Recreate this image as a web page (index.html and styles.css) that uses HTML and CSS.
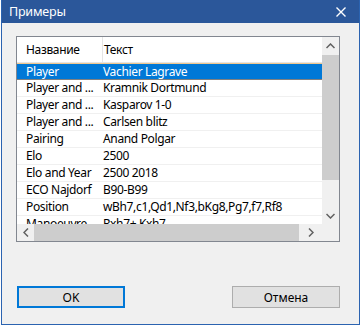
FILE: index.html
```html
<!DOCTYPE html>
<html lang="ru">
<head>
  <meta charset="UTF-8" />
  <title>Примеры</title>
  <link rel="stylesheet" href="styles.css">
</head>
<body>
  <div class="window">
    <div class="titlebar">
      <span class="title">Примеры</span>
      <svg class="close" width="10" height="10" viewBox="0 0 10 10">
        <path d="M0.5 0.5 L9.5 9.5 M9.5 0.5 L0.5 9.5" stroke="#fff" stroke-width="1.4" />
      </svg>
    </div>

    <div class="content">
      <div class="listview">
        <div class="viewport">
          <div class="row header">
            <div class="cell name">Название</div>
            <div class="cell text">Текст</div>
          </div>
          <div class="row selected">
            <div class="cell name">Player</div>
            <div class="cell text">Vachier Lagrave</div>
          </div>
          <div class="row">
            <div class="cell name">Player and ...</div>
            <div class="cell text">Kramnik Dortmund</div>
          </div>
          <div class="row">
            <div class="cell name">Player and ...</div>
            <div class="cell text">Kasparov 1-0</div>
          </div>
          <div class="row">
            <div class="cell name">Player and ...</div>
            <div class="cell text">Carlsen blitz</div>
          </div>
          <div class="row">
            <div class="cell name">Pairing</div>
            <div class="cell text">Anand Polgar</div>
          </div>
          <div class="row">
            <div class="cell name">Elo</div>
            <div class="cell text">2500</div>
          </div>
          <div class="row">
            <div class="cell name">Elo and Year</div>
            <div class="cell text">2500 2018</div>
          </div>
          <div class="row">
            <div class="cell name">ECO Najdorf</div>
            <div class="cell text">B90-B99</div>
          </div>
          <div class="row">
            <div class="cell name">Position</div>
            <div class="cell text">wBh7,c1,Qd1,Nf3,bKg8,Pg7,f7,Rf8</div>
          </div>
          <div class="row">
            <div class="cell name">Manoeuvre</div>
            <div class="cell text">Rxh7+ Kxh7</div>
          </div>
        </div>

        <div class="vscroll">
          <div class="arrow">
            <svg width="9" height="6" viewBox="0 0 9 6"><path d="M0.5 5 L4.5 1 L8.5 5" fill="none" stroke="#606060" stroke-width="1.5"/></svg>
          </div>
          <div class="vthumb"></div>
          <div class="vtrack"></div>
          <div class="arrow">
            <svg width="9" height="6" viewBox="0 0 9 6"><path d="M0.5 1 L4.5 5 L8.5 1" fill="none" stroke="#606060" stroke-width="1.5"/></svg>
          </div>
        </div>

        <div class="hscroll">
          <div class="arrow">
            <svg width="6" height="9" viewBox="0 0 6 9"><path d="M5 0.5 L1 4.5 L5 8.5" fill="none" stroke="#606060" stroke-width="1.5"/></svg>
          </div>
          <div class="hthumb"></div>
          <div class="arrow wide">
            <svg width="6" height="9" viewBox="0 0 6 9"><path d="M1 0.5 L5 4.5 L1 8.5" fill="none" stroke="#606060" stroke-width="1.5"/></svg>
          </div>
        </div>
        <div class="corner"></div>
      </div>

      <div class="buttons">
        <button class="btn default">OK</button>
        <button class="btn">Отмена</button>
      </div>
    </div>
  </div>
</body>
</html>
```

FILE: styles.css
```css
body {
  margin: 0;
  background: #ffffff;
  font-family: "Noto Sans", "Open Sans", sans-serif;
  font-size: 12px;
  color: #000;
}

.window {
  margin-left: 1px;
  width: 357px;
  height: 324px;
  border: 1px solid #2b63b0;
  border-top: none;
  background: #f0f0f0;
  display: flex;
  flex-direction: column;
}

.titlebar {
  height: 23px;
  background: #2b579a;
  color: #fff;
  display: flex;
  align-items: center;
  justify-content: space-between;
  padding: 0 13px 0 7px;
}

.title {
  font-size: 12.5px;
  letter-spacing: -0.2px;
}

.content {
  flex: 1;
  padding: 13px 19px 0 14px;
}

.listview {
  height: 204px;
  border: 1px solid #828790;
  background: #fff;
  display: grid;
  grid-template-columns: 1fr 17px;
  grid-template-rows: 1fr 17px;
}

.viewport {
  overflow: hidden;
}

.row {
  display: flex;
  height: 16px;
  line-height: 16px;
  border-bottom: 1px solid #f0f0f0;
  white-space: nowrap;
  letter-spacing: -0.35px;
}

.row.header {
  height: 25px;
  line-height: 25px;
  border-bottom: 1px solid #e5e5e5;
}

.header .name {
  border-right: 1px solid #e5e5e5;
  padding-left: 6px;
  width: 75px;
}

.header .text {
  padding-left: 6px;
}

.cell.name {
  width: 76px;
  padding-left: 9px;
  overflow: hidden;
  flex: none;
}

.cell.text {
  padding-left: 1px;
}

.row.selected {
  background: #0078d7;
  color: #fff;
  border-top: 1px solid #f0c890;
  border-bottom: 1px solid #808080;
  height: 15px;
  line-height: 15px;
}

.vscroll {
  grid-row: 1;
  grid-column: 2;
  display: flex;
  flex-direction: column;
  background: #f0f0f0;
}

.arrow {
  width: 17px;
  height: 17px;
  display: flex;
  align-items: center;
  justify-content: center;
  flex: none;
}

.vthumb {
  height: 125px;
  margin: 1px 0 0;
  background: #cdcdcd;
}

.vtrack {
  flex: 1;
}

.hscroll {
  grid-row: 2;
  grid-column: 1;
  display: flex;
  background: #f0f0f0;
}

.hthumb {
  flex: 1;
  margin-right: 1px;
  background: #cdcdcd;
}

.arrow.wide {
  width: 22px;
}

.corner {
  background: #f0f0f0;
}

.buttons {
  display: flex;
  justify-content: space-between;
  margin-top: 44px;
  padding-left: 1px;
}

.btn {
  width: 108px;
  height: 22px;
  border: 1px solid #adadad;
  background: #e1e1e1;
  font-family: "Noto Sans", "Open Sans", sans-serif;
  font-size: 12px;
  color: #000;
  padding: 0;
}

.btn.default {
  border: 2px solid #0078d7;
}
```
